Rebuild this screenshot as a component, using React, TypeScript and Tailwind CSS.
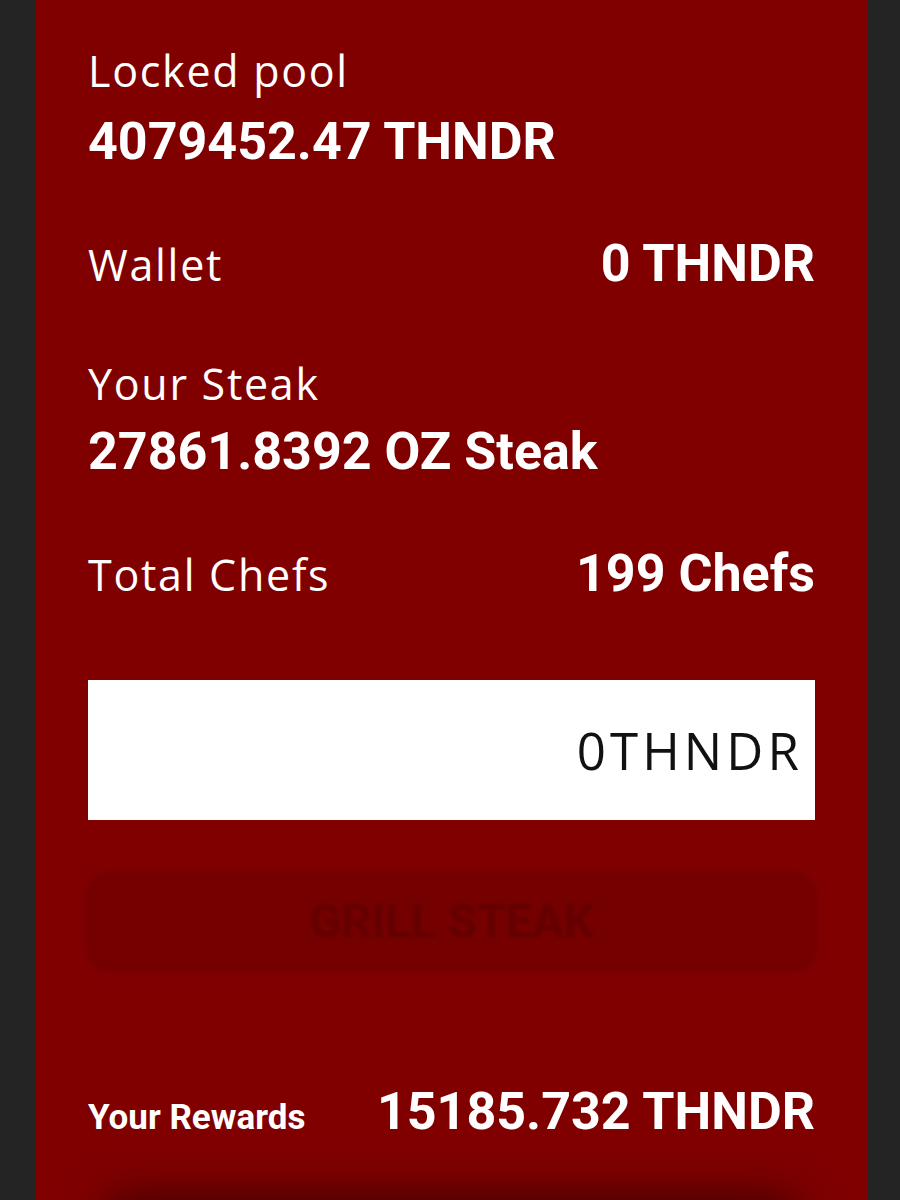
const label = "font-['Open_Sans',sans-serif] font-normal text-[43px] leading-[48px] tracking-[0.04em] text-white";
const value = "font-['Roboto',sans-serif] font-bold text-[52px] leading-[60px] text-white";

export default function App() {
  return (
    <div className="flex h-[1200px] w-full overflow-hidden bg-[#242424]">
      <div className="w-[36px] shrink-0" />
      <main className="w-[832px] shrink-0 bg-[#800000] pl-[52px] pr-[53px] pt-[47px]">
        <div className={label}>Locked pool</div>
        <div className={`${value} mt-[17px]`}>4079452.47 THNDR</div>

        <div className="mt-[62px] flex items-baseline justify-between">
          <span className={label}>Wallet</span>
          <span className={value}>0 THNDR</span>
        </div>

        <div className={`${label} mt-[66px]`}>Your Steak</div>
        <div className={`${value} mt-[14px]`}>27861.8392 OZ Steak</div>

        <div className="mt-[62px] flex items-baseline justify-between">
          <span className={label}>Total Chefs</span>
          <span className={value}>199 Chefs</span>
        </div>

        <div className="mt-[76px] flex h-[140px] items-center justify-end bg-white pr-[12px]">
          <span className="font-['Open_Sans',sans-serif] text-[51px] tracking-[0.08em] text-[#111]">0THNDR</span>
        </div>

        <button className="mt-[53px] flex h-[97px] w-full items-center justify-center rounded-[22px] bg-[#740000] shadow-[0_0_6px_rgba(90,0,0,0.5)]">
          <span className="font-['Roboto',sans-serif] text-[47px] font-bold text-[#650000] blur-[1px]">GRILL STEAK</span>
        </button>

        <div className="mt-[112px] flex items-baseline justify-between">
          <span className="font-['Roboto',sans-serif] text-[35px] font-bold text-white">Your Rewards</span>
          <span className={value}>15185.732 THNDR</span>
        </div>

        <div className="mx-auto mt-[58px] h-[200px] w-[700px] rounded-[30px] bg-[#800000] shadow-[0_-8px_40px_rgba(40,0,0,0.7)]" />
      </main>
      <div className="flex-1" />
    </div>
  );
}
